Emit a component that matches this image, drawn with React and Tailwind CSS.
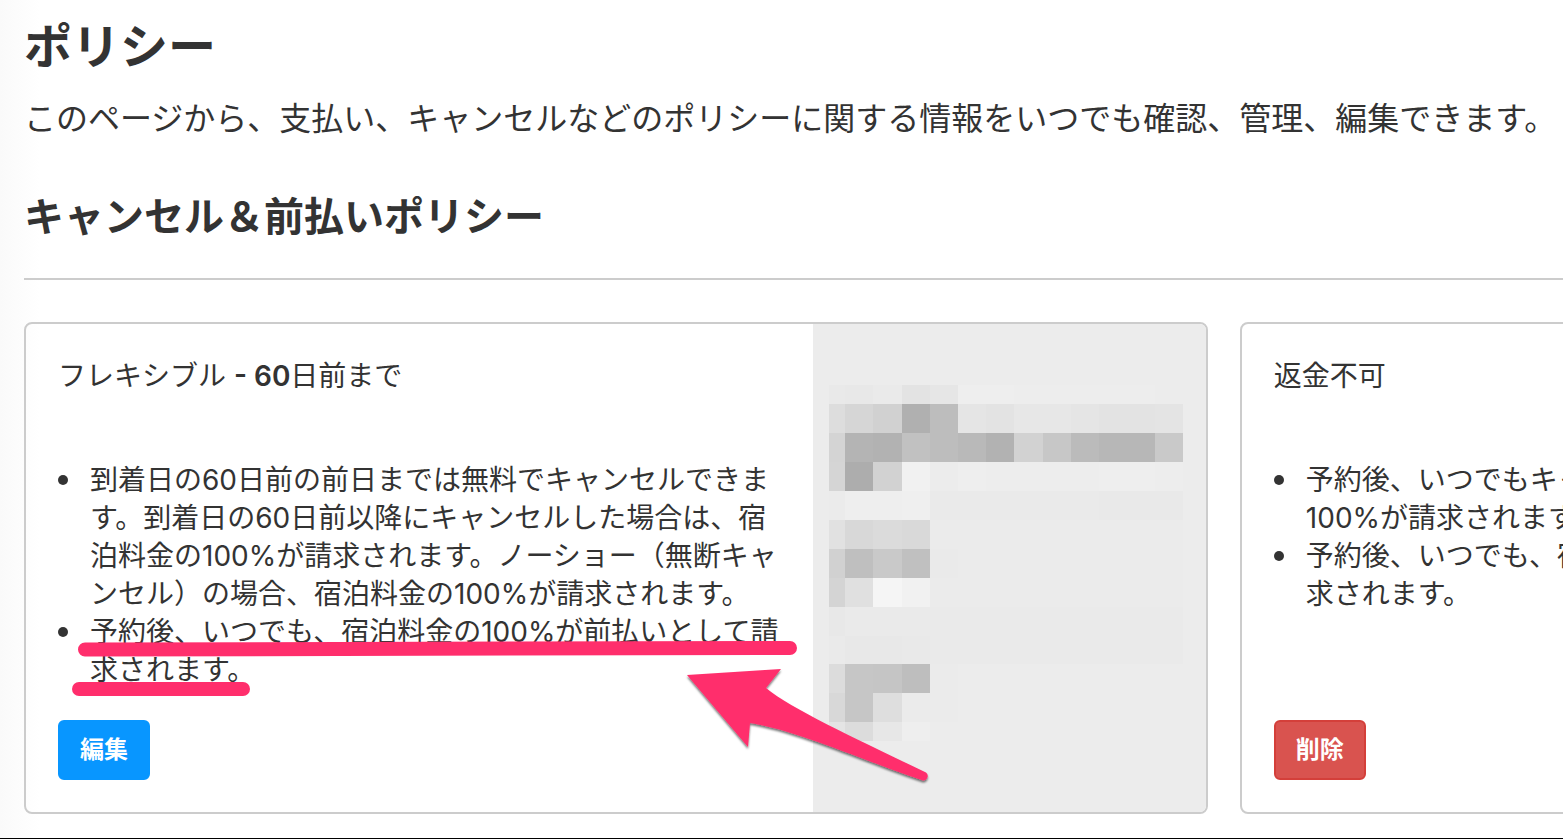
import React from 'react';

// Mosaic over the summary column: column edges, row edges and one shade per cell
const COLS = [0, 16, 44, 73, 101, 129, 157, 185, 214, 242, 270, 298, 326, 354];
const ROWS = [0, 19, 48, 77, 106, 135, 164, 193, 222, 251, 279, 308, 337, 356];
const SHADES = [
  ['e9', 'e8', 'ea', 'e3', 'e6', 'ee', 'ee', 'ed', 'ed', 'ed', 'ed', 'ed', 'ec'],
  ['dd', 'd6', 'd1', 'b0', 'bd', 'e5', 'e3', 'e7', 'e7', 'e5', 'e3', 'e3', 'e4'],
  ['d4', 'b4', 'b2', 'c1', 'bd', 'b9', 'b2', 'd2', 'c7', 'bb', 'b7', 'b7', 'c9'],
  ['d5', 'ad', 'd2', 'f1', 'ec', 'ee', 'ed', 'ed', 'ed', 'ed', 'ee', 'ee', 'ed'],
  ['eb', 'ee', 'ee', 'ef', 'ea', 'ea', 'ea', 'ea', 'ea', 'ea', 'e9', 'e9', 'e9'],
  ['e1', 'd8', 'db', 'd9', 'eb', 'eb', 'eb', 'eb', 'eb', 'eb', 'eb', 'eb', 'eb'],
  ['d1', 'bf', 'c9', 'c0', 'ea', 'eb', 'eb', 'eb', 'eb', 'eb', 'eb', 'eb', 'eb'],
  ['d4', 'e0', 'f5', 'f1', 'eb', 'eb', 'eb', 'eb', 'eb', 'eb', 'eb', 'eb', 'eb'],
  ['e8', 'ea', 'ea', 'ea', 'ea', 'ea', 'ea', 'ea', 'ea', 'ea', 'ea', 'ea', 'ea'],
  ['ea', 'e8', 'e8', 'e9', 'ea', 'ea', 'ea', 'ea', 'ea', 'ea', 'ea', 'ea', 'ea'],
  ['dc', 'c6', 'c5', 'be', 'eb', 'ec', 'ec', 'ec', 'ec', 'ec', 'ec', 'ec', 'ec'],
  ['d8', 'c6', 'de', 'eb', 'eb', 'ec', 'ec', 'ec', 'ec', 'ec', 'ec', 'ec', 'ec'],
  ['e4', 'dc', 'e7', 'ee', 'ec', 'ec', 'ec', 'ec', 'ec', 'ec', 'ec', 'ec', 'ec'],
];

const Mosaic = () => (
  <svg width="354" height="356" shapeRendering="crispEdges" aria-hidden="true">
    {SHADES.map((row, r) => row.map((shade, c) => (
      <rect
        key={`${r}-${c}`}
        x={COLS[c]}
        y={ROWS[r]}
        width={COLS[c + 1] - COLS[c]}
        height={ROWS[r + 1] - ROWS[r]}
        fill={`#${shade}${shade}${shade}`}
      />
    )))}
  </svg>
);

// Hand-drawn marks laid over the first card
const Annotation = () => (
  <svg className="absolute left-0 top-0 pointer-events-none" width="920" height="480" viewBox="26 324 920 480" aria-hidden="true">
    <defs>
      <filter id="arrow-shadow" x="-10%" y="-10%" width="120%" height="130%">
        <feDropShadow dx="0" dy="2" stdDeviation="1.2" floodColor="#000" floodOpacity="0.55" />
      </filter>
    </defs>
    <g stroke="#ff2e6c" strokeWidth="14" strokeLinecap="round">
      <path d="M85 649.5L790 648" />
      <path d="M79 689H243" />
    </g>
    <path
      d="M687 675L781 669L766 688C793 710 861 741 926 772.5A4.5 4.5 0 0 1 923 780.5C867 762 797 730 750 723L748 747Z"
      fill="#ff2e6c"
      filter="url(#arrow-shadow)"
    />
  </svg>
);

const PolicyCard = ({ title, items, action, actionClass, children }) => (
  <section className="relative flex shrink-0 basis-10/13 border-2 border-[#cccccc] rounded-lg">
    <div className="w-2/3 px-8 pt-[33px] pb-8 flex flex-col items-start">
      <h3>{title}</h3>
      <ul className="mt-[66px] mb-[31px] list-none">
        {items.map(item => (
          <li key={item} className="flex">
            <span className="w-8 shrink-0 flex items-center h-[38px]">
              <span className="w-[10px] h-[10px] rounded-full bg-[#333333]" />
            </span>
            <span className="flex-1">{item}</span>
          </li>
        ))}
      </ul>
      <button type="button" className={`mt-auto h-[60px] px-5 border-2 rounded-md text-2xl font-bold text-white ${actionClass}`}>
        {action}
      </button>
    </div>
    <div className="w-1/3 bg-[#ececec] rounded-r-md pl-4 pt-[61px]">
      {children}
    </div>
  </section>
);

const App = () => (
  <div className="overflow-hidden bg-linear-to-r from-[#fafafa] to-white to-[40px] pl-6 pt-[21px] pb-6 border-b border-black text-[#333333] text-[28px] leading-[38px] font-[Inter,'Noto_Sans_CJK_JP',sans-serif]" lang="ja">
    <h1 className="text-5xl leading-[52px] font-bold">ポリシー</h1>
    <p className="mt-6 text-[32px] leading-[44px] whitespace-nowrap">
      このページから、支払い、キャンセルなどのポリシーに関する情報をいつでも確認、管理、編集できます。
    </p>
    <h2 className="mt-[54px] text-[40px] leading-[44px] font-bold">キャンセル＆前払いポリシー</h2>
    <hr className="mt-[39px] border-t-2 border-[#cccccc]" />

    <div className="mt-[42px] flex gap-8">
      <PolicyCard
        title={<>フレキシブル <span className="font-semibold">- 60</span>日前まで</>}
        items={[
          '到着日の60日前の前日までは無料でキャンセルできます。到着日の60日前以降にキャンセルした場合は、宿泊料金の100%が請求されます。ノーショー（無断キャンセル）の場合、宿泊料金の100%が請求されます。',
          '予約後、いつでも、宿泊料金の100%が前払いとして請求されます。',
        ]}
        action="編集"
        actionClass="bg-[#0896ff] border-[#0896ff]"
      >
        <Mosaic />
        <Annotation />
      </PolicyCard>
      <PolicyCard
        title="返金不可"
        items={[
          '予約後、いつでもキャンセルした場合は、宿泊料金の100%が請求されます。',
          '予約後、いつでも、宿泊料金の100%が前払いとして請求されます。',
        ]}
        action="削除"
        actionClass="bg-[#d9534f] border-[#d43f3a]"
      />
    </div>
  </div>
);

export default App;
